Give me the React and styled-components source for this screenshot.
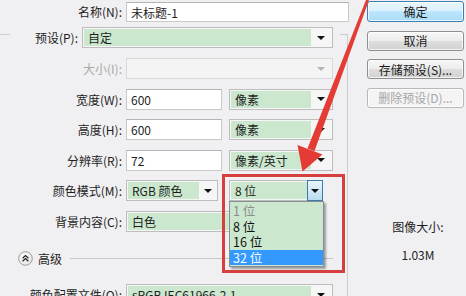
import React from "react";
import styled, { createGlobalStyle, css } from "styled-components";

const GlobalStyle = createGlobalStyle`
  html, body { margin: 0; padding: 0; background: #f0eff1; }
  body {
    font-family: "Noto Sans CJK SC", "Noto Sans", sans-serif;
    font-size: 12px;
    color: #1e1e1e;
    overflow: hidden;
  }
  * { box-sizing: border-box; }
`;

const Dialog = styled.div`
  position: relative;
  width: 466px;
  height: 296px;
  overflow: hidden;
  display: flex;
  background: #f0eff1;
`;

const LeftPane = styled.div`
  width: 348px;
  flex: none;
  padding-top: 2px;
`;

const Row = styled.div`
  display: grid;
  grid-template-columns: 122px auto;
  column-gap: 4px;
  align-items: stretch;
  height: ${(p) => p.$h || 21}px;
`;

const Label = styled.div`
  text-align: right;
  white-space: nowrap;
  line-height: ${(p) => p.$h || 21}px;
  color: ${(p) => (p.$disabled ? "#a9a9a9" : "#1e1e1e")};
`;

const Controls = styled.div`
  display: flex;
  gap: ${(p) => p.$gap || 7}px;
  height: 100%;
`;

const TextInput = styled.div`
  width: ${(p) => p.$w}px;
  height: 100%;
  background: #ffffff;
  border: 1px solid #c9c9c9;
  border-top-color: #b4b4b4;
  padding-left: 4px;
  display: flex;
  align-items: center;
  white-space: nowrap;
`;

const SelectBox = styled.div`
  position: relative;
  display: flex;
  width: ${(p) => p.$w}px;
  height: 100%;
  border: 1px solid ${(p) => (p.$disabled ? "#d8d8d8" : "#bdbdbd")};
  background: ${(p) => (p.$disabled ? "#f4f4f4" : "#f6f6f6")};
  padding: 1px;
`;

const SelectValue = styled.div`
  flex: 1;
  background: ${(p) => (p.$disabled ? "transparent" : "#cbe8cf")};
  padding-left: 4px;
  display: flex;
  align-items: center;
  white-space: nowrap;
  overflow: hidden;
`;

const ArrowZone = styled.div`
  width: ${(p) => p.$w || 20}px;
  display: flex;
  align-items: center;
  justify-content: center;
  ${(p) =>
    p.$active &&
    css`
      background: linear-gradient(#e9f5fc, #b9dcf2);
      border: 1px solid #3d7bad;
      margin: -2px -2px -2px 0;
    `}
`;

const Tri = styled.span`
  width: 0;
  height: 0;
  border-left: 4px solid transparent;
  border-right: 4px solid transparent;
  border-top: 4px solid ${(p) => (p.$disabled ? "#b5b5b5" : "#111")};
`;

const Group = styled.fieldset`
  margin: -1px 0 0 -12px;
  width: 360px;
  min-width: 0;
  border: 1px solid #c9ced3;
  padding: 0 14px 30px 11px;
`;

const Legend = styled.legend`
  margin-left: 10px;
  padding: 6px 7px 0 22px;
`;

const LegendInner = styled.div`
  display: flex;
  gap: 4px;
  height: 21px;
`;

const LegendLabel = styled.div`
  width: 46px;
  text-align: right;
  white-space: nowrap;
  line-height: 21px;
`;

const Stack = styled.div`
  display: flex;
  flex-direction: column;
  gap: 9.5px;
  padding-top: 10px;
`;

const AdvancedRow = styled.div`
  display: flex;
  align-items: center;
  gap: 5px;
  height: 16px;
  margin-top: 18.5px;
  padding-left: 18px;
`;

const AdvancedText = styled.span`
  white-space: nowrap;
  margin-right: 3px;
`;

const Rule = styled.div`
  flex: 1;
  border-top: 1px solid #c8c8c8;
`;

const ProfileRow = styled(Row)`
  margin-top: 18px;
`;

const ListWrap = styled.div`
  position: relative;
  display: flex;
  height: 100%;
`;

const DropList = styled.div`
  position: absolute;
  top: 100%;
  left: 0;
  width: 95px;
  background: #cbe8cf;
  border: 1px solid #8a8d92;
  padding: 1px 0;
  box-shadow: 2px 2px 2px rgba(0, 0, 0, 0.35);
  z-index: 2;
`;

const DropItem = styled.div`
  height: 15.5px;
  line-height: 15.5px;
  padding-left: 3px;
  font-size: 12.5px;
  white-space: nowrap;
  color: ${(p) => (p.$muted ? "#8c8c8c" : p.$selected ? "#ffffff" : "#111")};
  background: ${(p) => (p.$selected ? "#3399ff" : "transparent")};
`;

const RightPane = styled.div`
  flex: 1;
  padding: 1px 0 0 19px;
  display: flex;
  flex-direction: column;
`;

const ButtonCol = styled.div`
  display: flex;
  flex-direction: column;
  gap: 8.5px;
  width: 97px;
`;

const Button = styled.div`
  height: ${(p) => (p.$primary ? 21 : 20)}px;
  border: 1px solid ${(p) => (p.$primary ? "#3c7fb1" : p.$disabled ? "#b8b8b8" : "#8e8f8f")};
  border-radius: 3px;
  display: flex;
  align-items: center;
  justify-content: center;
  white-space: nowrap;
  color: ${(p) => (p.$disabled ? "#a6a6a6" : "#1a1a1a")};
  background: ${(p) =>
    p.$primary
      ? "linear-gradient(#eaf6fd 0%, #d9f0fc 50%, #bee6fd 50%, #a9dbf6 100%)"
      : p.$disabled
      ? "#f4f4f4"
      : "linear-gradient(#f7f7f7 0%, #ececec 50%, #dedede 50%, #d2d2d2 100%)"};
  box-shadow: inset 0 0 0 1px rgba(255, 255, 255, 0.7);
`;

const Info = styled.div`
  width: 97px;
  padding-left: 5px;
  margin-top: 111px;
  text-align: center;
  line-height: 16px;
`;

const InfoValue = styled.div`
  margin-top: 12px;
`;

const RedBox = styled.div`
  position: absolute;
  left: 222px;
  top: 174px;
  width: 123px;
  height: 99px;
  border: 3px solid #d5403e;
  z-index: 3;
  pointer-events: none;
`;

const Overlay = styled.svg`
  position: absolute;
  left: 0;
  top: 0;
  z-index: 4;
  pointer-events: none;
`;

function Select({ w, value, disabled, arrowW }) {
  return (
    <SelectBox $w={w} $disabled={disabled}>
      <SelectValue $disabled={disabled}>{value}</SelectValue>
      <ArrowZone $w={arrowW}>
        <Tri $disabled={disabled} />
      </ArrowZone>
    </SelectBox>
  );
}

function CollapseIcon() {
  return (
    <svg width="15" height="15" viewBox="0 0 15 15">
      <defs>
        <radialGradient id="cg" cx="40%" cy="35%" r="70%">
          <stop offset="0" stopColor="#ffffff" />
          <stop offset="1" stopColor="#e2e2e2" />
        </radialGradient>
      </defs>
      <circle cx="7.5" cy="7.5" r="6.8" fill="url(#cg)" stroke="#9c9c9c" strokeWidth="1" />
      <path d="M4.6 7.2 L7.5 4.6 L10.4 7.2 M4.6 10.2 L7.5 7.6 L10.4 10.2" fill="none" stroke="#222" strokeWidth="1.3" />
    </svg>
  );
}

export default function App() {
  return (
    <>
      <GlobalStyle />
      <Dialog>
        <LeftPane>
          <Row $h={20}>
            <Label $h={20}>名称(N):</Label>
            <TextInput $w={223}>未标题-1</TextInput>
          </Row>
          <Group>
            <Legend>
              <LegendInner>
                <LegendLabel>预设(P):</LegendLabel>
                <Select w={251} value="自定" />
              </LegendInner>
            </Legend>
            <Stack>
              <Row>
                <Label $disabled>大小(I):</Label>
                <Select w={207} value="" disabled />
              </Row>
              <Row>
                <Label>宽度(W):</Label>
                <Controls>
                  <TextInput $w={96}>600</TextInput>
                  <Select w={104} value="像素" />
                </Controls>
              </Row>
              <Row>
                <Label>高度(H):</Label>
                <Controls>
                  <TextInput $w={96}>600</TextInput>
                  <Select w={104} value="像素" />
                </Controls>
              </Row>
              <Row>
                <Label>分辨率(R):</Label>
                <Controls>
                  <TextInput $w={96}>72</TextInput>
                  <Select w={104} value="像素/英寸" />
                </Controls>
              </Row>
              <Row>
                <Label>颜色模式(M):</Label>
                <Controls $gap={11}>
                  <Select w={92} value="RGB 颜色" arrowW={17} />
                  <ListWrap>
                    <SelectBox $w={94}>
                      <SelectValue>8 位</SelectValue>
                      <ArrowZone $w={16} $active>
                        <Tri />
                      </ArrowZone>
                    </SelectBox>
                    <DropList>
                      <DropItem $muted>1 位</DropItem>
                      <DropItem>8 位</DropItem>
                      <DropItem>16 位</DropItem>
                      <DropItem $selected>32 位</DropItem>
                    </DropList>
                  </ListWrap>
                </Controls>
              </Row>
              <Row>
                <Label>背景内容(C):</Label>
                <Select w={197} value="白色" />
              </Row>
            </Stack>
            <AdvancedRow>
              <CollapseIcon />
              <AdvancedText>高级</AdvancedText>
              <Rule />
            </AdvancedRow>
            <ProfileRow>
              <Label>颜色配置文件(O):</Label>
              <Select w={207} value="sRGB IEC61966-2.1" />
            </ProfileRow>
          </Group>
        </LeftPane>
        <RightPane>
          <ButtonCol>
            <Button $primary>确定</Button>
            <Button>取消</Button>
            <Button>存储预设(S)...</Button>
            <Button $disabled>删除预设(D)...</Button>
          </ButtonCol>
          <Info>
            <div>图像大小:</div>
            <InfoValue>1.03M</InfoValue>
          </Info>
        </RightPane>
        <RedBox />
        <Overlay width="466" height="296" viewBox="0 0 466 296">
          <polygon points="366,0 369,0 314.5,151 307.5,148.5" fill="#e53b35" />
          <polygon points="297.5,145 322.5,154.5 302.5,171.5" fill="#e53b35" />
        </Overlay>
      </Dialog>
    </>
  );
}
